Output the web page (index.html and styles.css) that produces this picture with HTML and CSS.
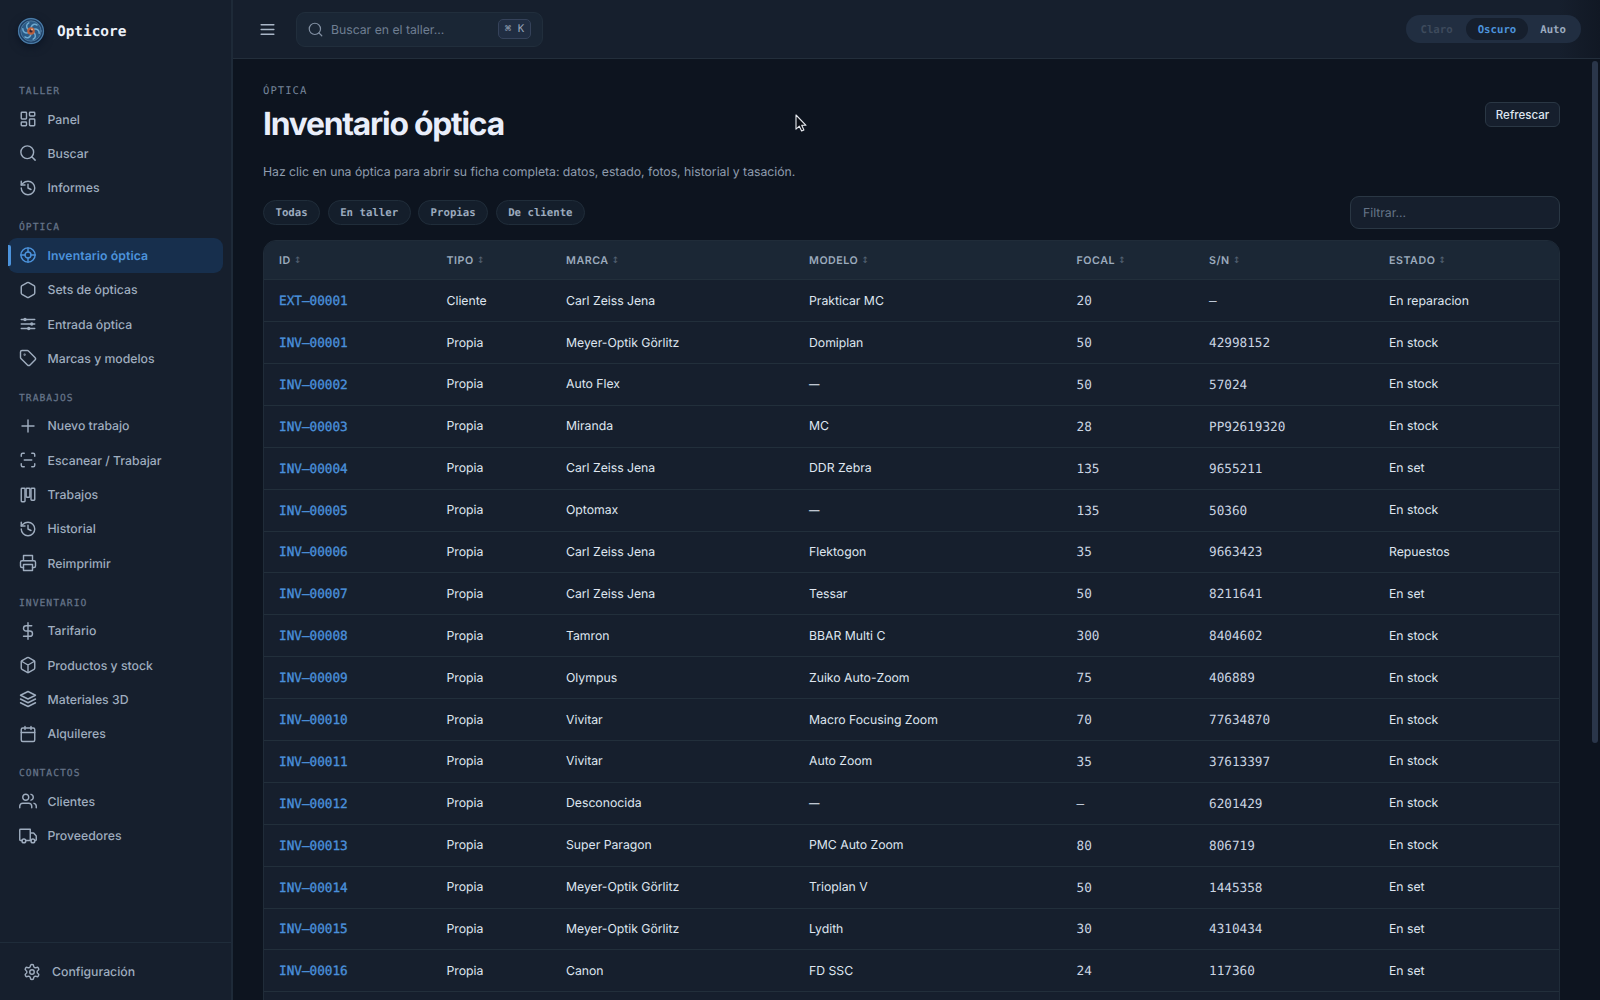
FILE: index.html
```html
<!DOCTYPE html>
<html lang="es">
<head>
<meta charset="utf-8">
<title>Opticore</title>
<link rel="stylesheet" href="styles.css">
</head>
<body>
<div class="app">
  <aside class="sidebar">
    <div class="brand">
      <svg class="logo" viewBox="0 0 28 28">
        <circle cx="14" cy="14" r="13.2" fill="#1d3f66"/>
        <circle cx="14" cy="14" r="12.4" fill="none" stroke="#4f80aa" stroke-width="1.1"/>
        <circle cx="14" cy="14" r="10.2" fill="#2a5a86" stroke="#6a93b5" stroke-width=".6"/>
        <g fill="none" stroke="#6fa9cf" stroke-width="1.5" stroke-linecap="round">
          <path id="blade" d="M14 10.5C15 7.500 17.500 6.500 20 8"/>
          <use href="#blade" transform="rotate(60 14 14)"/>
          <use href="#blade" transform="rotate(120 14 14)"/>
          <use href="#blade" transform="rotate(180 14 14)"/>
          <use href="#blade" transform="rotate(240 14 14)"/>
          <use href="#blade" transform="rotate(300 14 14)"/>
        </g>
        <circle cx="14" cy="14" r="3.8" fill="#b9603f"/>
        <circle cx="14" cy="14" r="1.6" fill="#3c2530"/>
        <circle cx="15" cy="12.400" r="1" fill="#efb08c"/>
      </svg>
      <span>Opticore</span>
    </div>
    <nav class="nav">
      <h2>Taller</h2>
      <a><svg viewBox="0 0 24 24"><rect x="3" y="3" width="7" height="9" rx="1"/><rect x="14" y="3" width="7" height="5" rx="1"/><rect x="14" y="12" width="7" height="9" rx="1"/><rect x="3" y="16" width="7" height="5" rx="1"/></svg>Panel</a>
      <a><svg viewBox="0 0 24 24"><circle cx="11" cy="11" r="8.500"/><path d="m21.500 21.500-4.500-4.500"/></svg>Buscar</a>
      <a><svg viewBox="0 0 24 24"><path d="M3 12a9 9 0 1 0 9-9 9.750 9.750 0 0 0-6.740 2.740L3 8"/><path d="M3 3v5h5M12 7v5l4 2"/></svg>Informes</a>
      <h2>Óptica</h2>
      <a class="active"><svg viewBox="0 0 24 24"><circle cx="12" cy="12" r="9.500"/><circle cx="12" cy="12" r="4"/><path d="M12 2.500V8M12 16v5.500M2.500 12H8M16 12h5.500"/></svg>Inventario óptica</a>
      <a><svg viewBox="0 0 24 24"><path d="M21 16V8a2 2 0 0 0-1-1.730l-7-4a2 2 0 0 0-2 0l-7 4A2 2 0 0 0 3 8v8a2 2 0 0 0 1 1.730l7 4a2 2 0 0 0 2 0l7-4A2 2 0 0 0 21 16z"/></svg>Sets de ópticas</a>
      <a><svg viewBox="0 0 24 24"><path d="M3 6h18M3 12h18M3 18h18"/><g class="dot"><circle cx="8" cy="6" r="2.200"/><circle cx="17" cy="12" r="2.200"/><circle cx="13" cy="18" r="2.200"/></g></svg>Entrada óptica</a>
      <a><svg viewBox="0 0 24 24"><path d="M12.590 2.590A2 2 0 0 0 11.170 2H4a2 2 0 0 0-2 2v7.170a2 2 0 0 0 .590 1.420l8.700 8.700a2.430 2.430 0 0 0 3.420 0l6.580-6.580a2.430 2.430 0 0 0 0-3.420z"/><circle cx="7.500" cy="7.500" r=".5"/></svg>Marcas y modelos</a>
      <h2>Trabajos</h2>
      <a><svg viewBox="0 0 24 24"><path d="M4 12h16M12 4v16"/></svg>Nuevo trabajo</a>
      <a><svg viewBox="0 0 24 24"><path d="M3 7V5a2 2 0 0 1 2-2h2M17 3h2a2 2 0 0 1 2 2v2M21 17v2a2 2 0 0 1-2 2h-2M7 21H5a2 2 0 0 1-2-2v-2M7 12h10"/></svg>Escanear / Trabajar</a>
      <a><svg viewBox="0 0 24 24"><rect x="3" y="3" width="5" height="18" rx="1"/><rect x="9.500" y="3" width="5" height="12" rx="1"/><rect x="16" y="3" width="5" height="16" rx="1"/></svg>Trabajos</a>
      <a><svg viewBox="0 0 24 24"><path d="M3 12a9 9 0 1 0 9-9 9.750 9.750 0 0 0-6.740 2.740L3 8"/><path d="M3 3v5h5M12 7v5l4 2"/></svg>Historial</a>
      <a><svg viewBox="0 0 24 24"><path d="M6 18H4a2 2 0 0 1-2-2v-5a2 2 0 0 1 2-2h16a2 2 0 0 1 2 2v5a2 2 0 0 1-2 2h-2M6 9V2h12v7"/><rect x="6" y="14" width="12" height="8"/></svg>Reimprimir</a>
      <h2>Inventario</h2>
      <a><svg viewBox="0 0 24 24"><path d="M12 1v22M17 5H9.500a3.500 3.500 0 0 0 0 7h5a3.500 3.500 0 0 1 0 7H6"/></svg>Tarifario</a>
      <a><svg viewBox="0 0 24 24"><path d="M21 16V8a2 2 0 0 0-1-1.730l-7-4a2 2 0 0 0-2 0l-7 4A2 2 0 0 0 3 8v8a2 2 0 0 0 1 1.730l7 4a2 2 0 0 0 2 0l7-4A2 2 0 0 0 21 16z"/><path d="M3.300 7 12 12l8.700-5M12 22V12"/></svg>Productos y stock</a>
      <a><svg viewBox="0 0 24 24"><path d="m12 2 10 5-10 5L2 7zM2 12l10 5 10-5M2 17l10 5 10-5"/></svg>Materiales 3D</a>
      <a><svg viewBox="0 0 24 24"><rect x="3" y="4" width="18" height="18" rx="2"/><path d="M16 2v4M8 2v4M3 10h18"/></svg>Alquileres</a>
      <h2>Contactos</h2>
      <a><svg viewBox="0 0 24 24"><path d="M17 21v-2a4 4 0 0 0-4-4H5a4 4 0 0 0-4 4v2"/><circle cx="9" cy="7" r="4"/><path d="M23 21v-2a4 4 0 0 0-3-3.870M16 3.130a4 4 0 0 1 0 7.750"/></svg>Clientes</a>
      <a><svg viewBox="0 0 24 24"><path d="M4 18H2a1 1 0 0 1-1-1V4a1 1 0 0 1 1-1h13v15H9M15 8h4.500l3.500 4v5a1 1 0 0 1-1 1h-1M15 18h1"/><circle cx="6.500" cy="18.500" r="2.500"/><circle cx="18.500" cy="18.500" r="2.500"/></svg>Proveedores</a>
    </nav>
    <div class="settings">
      <svg viewBox="0 0 24 24"><path d="M12.220 2h-.440a2 2 0 0 0-2 2v.180a2 2 0 0 1-1 1.730l-.430.250a2 2 0 0 1-2 0l-.150-.080a2 2 0 0 0-2.730.730l-.220.380a2 2 0 0 0 .730 2.730l.150.100a2 2 0 0 1 1 1.720v.510a2 2 0 0 1-1 1.740l-.150.090a2 2 0 0 0-.730 2.730l.220.380a2 2 0 0 0 2.730.730l.150-.080a2 2 0 0 1 2 0l.430.250a2 2 0 0 1 1 1.730V20a2 2 0 0 0 2 2h.440a2 2 0 0 0 2-2v-.180a2 2 0 0 1 1-1.730l.430-.250a2 2 0 0 1 2 0l.150.080a2 2 0 0 0 2.730-.730l.220-.390a2 2 0 0 0-.730-2.730l-.150-.080a2 2 0 0 1-1-1.740v-.500a2 2 0 0 1 1-1.740l.150-.090a2 2 0 0 0 .730-2.730l-.220-.380a2 2 0 0 0-2.730-.730l-.150.080a2 2 0 0 1-2 0l-.430-.250a2 2 0 0 1-1-1.730V4a2 2 0 0 0-2-2z"/><circle cx="12" cy="12" r="3"/></svg>Configuración
    </div>
  </aside>
  <div class="main">
    <header class="topbar">
      <svg class="burger" viewBox="0 0 24 24"><path d="M4 6h16M4 12h16M4 18h16"/></svg>
      <div class="search">
        <svg viewBox="0 0 24 24"><circle cx="11" cy="11" r="9"/><path d="m22 22-4.500-4.500"/></svg>
        <span>Buscar en el taller...</span>
        <kbd>⌘ K</kbd>
      </div>
      <div class="theme"><span class="off">Claro</span><span class="on">Oscuro</span><span>Auto</span></div>
    </header>
    <main class="content">
      <div class="heading">
        <div>
          <p class="eyebrow">Óptica</p>
          <h1>Inventario óptica</h1>
        </div>
        <button class="refresh">Refrescar</button>
      </div>
      <p class="lead">Haz clic en una óptica para abrir su ficha completa: datos, estado, fotos, historial y tasación.</p>
      <div class="filters">
        <span class="chip">Todas</span><span class="chip">En taller</span><span class="chip">Propias</span><span class="chip">De cliente</span>
        <div class="filter">Filtrar...</div>
      </div>
      <div class="table">
        <div class="row head"><b>ID <i>↕</i></b><b>Tipo <i>↕</i></b><b>Marca <i>↕</i></b><b>Modelo <i>↕</i></b><b>Focal <i>↕</i></b><b>S/N <i>↕</i></b><b>Estado <i>↕</i></b></div>
        <div class="row"><a>EXT–00001</a><span>Cliente</span><span>Carl Zeiss Jena</span><span>Prakticar MC</span><code>20</code><code>–</code><span>En reparacion</span></div>
        <div class="row"><a>INV–00001</a><span>Propia</span><span>Meyer-Optik Görlitz</span><span>Domiplan</span><code>50</code><code>42998152</code><span>En stock</span></div>
        <div class="row"><a>INV–00002</a><span>Propia</span><span>Auto Flex</span><span class="none">—</span><code>50</code><code>57024</code><span>En stock</span></div>
        <div class="row"><a>INV–00003</a><span>Propia</span><span>Miranda</span><span>MC</span><code>28</code><code>PP92619320</code><span>En stock</span></div>
        <div class="row"><a>INV–00004</a><span>Propia</span><span>Carl Zeiss Jena</span><span>DDR Zebra</span><code>135</code><code>9655211</code><span>En set</span></div>
        <div class="row"><a>INV–00005</a><span>Propia</span><span>Optomax</span><span class="none">—</span><code>135</code><code>50360</code><span>En stock</span></div>
        <div class="row"><a>INV–00006</a><span>Propia</span><span>Carl Zeiss Jena</span><span>Flektogon</span><code>35</code><code>9663423</code><span>Repuestos</span></div>
        <div class="row"><a>INV–00007</a><span>Propia</span><span>Carl Zeiss Jena</span><span>Tessar</span><code>50</code><code>8211641</code><span>En set</span></div>
        <div class="row"><a>INV–00008</a><span>Propia</span><span>Tamron</span><span>BBAR Multi C</span><code>300</code><code>8404602</code><span>En stock</span></div>
        <div class="row"><a>INV–00009</a><span>Propia</span><span>Olympus</span><span>Zuiko Auto-Zoom</span><code>75</code><code>406889</code><span>En stock</span></div>
        <div class="row"><a>INV–00010</a><span>Propia</span><span>Vivitar</span><span>Macro Focusing Zoom</span><code>70</code><code>77634870</code><span>En stock</span></div>
        <div class="row"><a>INV–00011</a><span>Propia</span><span>Vivitar</span><span>Auto Zoom</span><code>35</code><code>37613397</code><span>En stock</span></div>
        <div class="row"><a>INV–00012</a><span>Propia</span><span>Desconocida</span><span class="none">—</span><code>–</code><code>6201429</code><span>En stock</span></div>
        <div class="row"><a>INV–00013</a><span>Propia</span><span>Super Paragon</span><span>PMC Auto Zoom</span><code>80</code><code>806719</code><span>En stock</span></div>
        <div class="row"><a>INV–00014</a><span>Propia</span><span>Meyer-Optik Görlitz</span><span>Trioplan V</span><code>50</code><code>1445358</code><span>En set</span></div>
        <div class="row"><a>INV–00015</a><span>Propia</span><span>Meyer-Optik Görlitz</span><span>Lydith</span><code>30</code><code>4310434</code><span>En set</span></div>
        <div class="row"><a>INV–00016</a><span>Propia</span><span>Canon</span><span>FD SSC</span><code>24</code><code>117360</code><span>En set</span></div>
        <div class="row"></div>
      </div>
      <div class="scrollbar"></div>
    </main>
  </div>
</div>
<svg class="cursor" viewBox="0 0 12 18"><path d="M1 1v14.200l3.300-3 2.300 4.800 2.300-1-2.200-4.700H11z" fill="#0b0f16" stroke="#e8ebf0" stroke-width="1.100"/></svg>
</body>
</html>
```
FILE: styles.css
```css
* { box-sizing: border-box; }
body {
  margin: 0;
  background: #0d141f;
  color: #dfe6f0;
  font: 12.250px/17px Inter, sans-serif;
  letter-spacing: -.02px;
  text-rendering: geometricPrecision;
  overflow: hidden;
}
h1, h2, p { margin: 0; }
svg { fill: none; stroke: currentColor; stroke-width: 1.9; stroke-linecap: round; stroke-linejoin: round; flex: none; }
.app { display: flex; height: 1000px; }

.sidebar {
  width: 233px;
  flex: none;
  display: flex;
  flex-direction: column;
  background: #161f2d;
  border-right: 2px solid #1e2a38;
}
.brand {
  display: flex;
  align-items: center;
  gap: 12.500px;
  height: 61px;
  padding-left: 16.500px;
  font: bold 14.400px "DejaVu Sans Mono", monospace;
  letter-spacing: 0;
  color: #edf2fa;
}
.brand span { padding-top: 2px; }
.logo { width: 28px; height: 28px; stroke: none; filter: drop-shadow(0 3px 4px #0b1424); }
.nav { flex: 1; padding: 7.600px 8px 0; }
.nav h2 {
  height: 33.400px;
  padding: 17.500px 0 0 11px;
  font: 9.700px/12px "DejaVu Sans Mono", monospace;
  letter-spacing: 1px;
  text-transform: uppercase;
  color: #66758a;
  -webkit-text-stroke: .25px;
}
.nav a {
  position: relative;
  display: flex;
  align-items: center;
  gap: 11px;
  height: 34.300px;
  padding-left: 10.500px;
  border-radius: 9px;
  font-weight: 500;
  letter-spacing: 0;
  color: #9fadbf;
}
.nav svg, .settings svg { width: 18px; height: 18px; }
.nav .dot { fill: currentColor; stroke: none; }
.nav .active { background: #172f4d; color: #4c93dc; font-weight: 600; letter-spacing: .07px; }
.nav .active::before {
  content: "";
  position: absolute;
  left: 0;
  top: 7px;
  width: 3px;
  height: 21px;
  border-radius: 0 2px 2px 0;
  background: #4c93dc;
}
.settings {
  display: flex;
  align-items: center;
  gap: 11.500px;
  height: 58px;
  padding-left: 22.500px;
  border-top: 1px solid #1f2c3a;
  font-weight: 500;
  letter-spacing: 0;
  color: #9fadbf;
}

.main { flex: 1; min-width: 0; display: flex; flex-direction: column; }
.topbar {
  display: flex;
  align-items: center;
  height: 59px;
  padding: 0 19px 0 25px;
  background: linear-gradient(90deg, #161f2d 97%, #111824);
  border-bottom: 1px solid #232e3b;
}
.burger { width: 19px; height: 19px; color: #a9b6c7; }
.search {
  display: flex;
  align-items: center;
  width: 247px;
  height: 35px;
  margin-left: 19px;
  padding: 0 11px;
  gap: 8px;
  background: #1a2635;
  border: 1px solid #212e3c;
  border-radius: 9px;
  color: #6f7e92;
}
.search svg { width: 15px; height: 15px; color: #8290a3; }
.search span { flex: 1; }
kbd {
  width: 33px;
  text-align: center;
  border: 1px solid #35425a;
  border-radius: 5px;
  background: #202d42;
  color: #98a5b8;
  font: 10.700px/18px "DejaVu Sans Mono", monospace;
  letter-spacing: 0;
}
.theme {
  display: flex;
  height: 28px;
  margin-left: auto;
  padding: 3px;
  border-radius: 14px;
  background: #212e41;
  font: bold 10.700px/23px "DejaVu Sans Mono", monospace;
  letter-spacing: 0;
  color: #9cabbf;
}
.theme span { padding: 0 12px; border-radius: 11px; }
.theme .off { color: #3d4a5c; padding-right: 13px; padding-left: 11px; }
.theme .on { background: #161f2d; color: #4c93dc; }

.content { position: relative; flex: 1; min-height: 0; padding: 24px 40px 0 30px; overflow: hidden; }
.heading { display: flex; justify-content: space-between; height: 80px; }
.eyebrow { padding-top: 1px; font: 10.600px/14px "DejaVu Sans Mono", monospace; letter-spacing: 1px; text-transform: uppercase; color: #75849a; }
h1 { margin-top: 6px; font-size: 31.800px; line-height: 40px; font-weight: 700; letter-spacing: -1.230px; color: #e9eefa; }
.refresh {
  width: 75px;
  height: 25px;
  margin-top: 19px;
  padding: 0;
  border: 1px solid #2a3744;
  border-radius: 6px;
  background: #161f2d;
  color: #dfe6f0;
  font: 500 11.500px Inter, sans-serif;
  letter-spacing: 0;
}
.lead { height: 33px; color: #8f9cae; }
.filters { display: flex; align-items: center; gap: 7.500px; height: 33px; }
.chip {
  height: 25px;
  padding: 0 11.500px;
  border: 1px solid #202d3a;
  border-radius: 13px;
  background: #141e2b;
  color: #9cabbf;
  font: bold 10.700px/24px "DejaVu Sans Mono", monospace;
  letter-spacing: 0;
}
.filter {
  width: 210px;
  height: 33px;
  margin-left: auto;
  padding: 0 12px;
  border: 1px solid #2a3744;
  border-radius: 9px;
  background: #161f2d;
  color: #657488;
  line-height: 31px;
}
.table { margin-top: 11px; height: 800px; border: 1px solid #202c39; border-radius: 13px; background: #161f2d; overflow: hidden; }
.row {
  display: grid;
  grid-template-columns: 167.500px 119.500px 243px 267.500px 132.500px 180px 1fr;
  align-items: center;
  height: 41.900px;
  padding-left: 15px;
  border-bottom: 1px solid #222f3b;
}
.row span { margin-top: -1px; }
.row .none { font-size: 10.500px; margin-top: 0; }
.head { height: 39.200px; background: #1b2735; text-transform: uppercase; font-size: 10.700px; letter-spacing: .52px; color: #9cabbd; }
.row b { padding-top: 1px; font-weight: 600; }
.row i { font: 12px/10px "DejaVu Sans Mono", monospace; letter-spacing: 0; color: #526071; vertical-align: 1px; }
.row a, .row code { font: 12.700px "DejaVu Sans Mono", monospace; letter-spacing: 0; }
.row a { color: #4a90db; -webkit-text-stroke: .35px; }
.row code { color: #cbd5e2; }
.scrollbar { position: absolute; right: 2px; top: 2px; width: 6px; height: 682px; border-radius: 3px; background: #2a364a; }
.cursor { position: absolute; left: 795px; top: 114px; width: 12px; height: 18px; }
```
